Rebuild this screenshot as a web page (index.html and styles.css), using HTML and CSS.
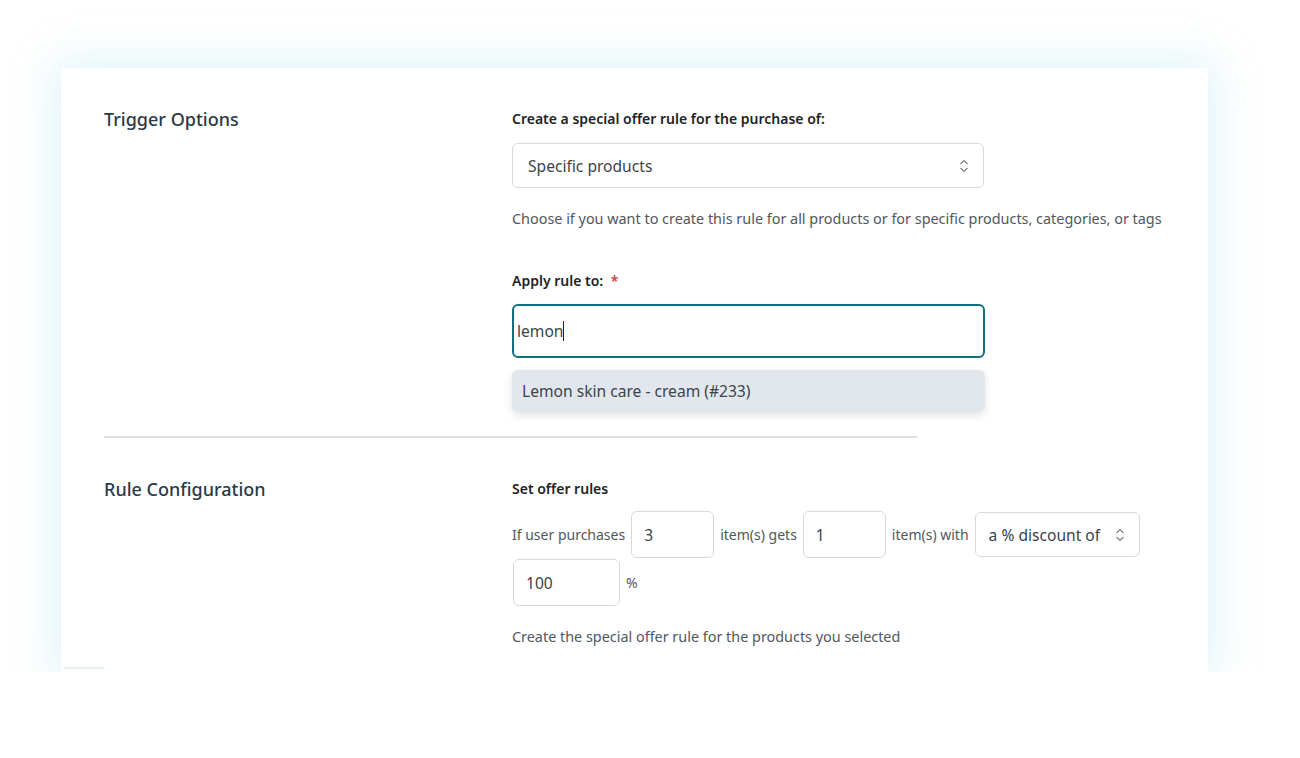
FILE: index.html
```html
<!DOCTYPE html>
<html lang="en">
<head>
  <meta charset="UTF-8" />
  <meta name="viewport" content="width=device-width, initial-scale=1.0" />
  <title>Special Offer Rule</title>
  <link rel="stylesheet" href="styles.css">
</head>
<body>
  <div class="card">
    <div class="section">
      <h2 class="section-title">Trigger Options</h2>
      <div class="fields">
        <label class="field-label">Create a special offer rule for the purchase of:</label>
        <div class="select select-wide">
          <span>Specific products</span>
          <svg class="chev" width="10" height="16" viewBox="0 0 10 16"><path d="M1.5 6 L5 2.5 L8.5 6 M1.5 10 L5 13.5 L8.5 10" fill="none" stroke="#7b8189" stroke-width="1.2"/></svg>
        </div>
        <p class="help">Choose if you want to create this rule for all products or for specific products, categories, or tags</p>

        <label class="field-label label-gap">Apply rule to: <span class="req">*</span></label>
        <div class="search">lemon<span class="caret"></span></div>
        <div class="suggest">Lemon skin care - cream (#233)</div>
      </div>
    </div>

    <hr class="divider">

    <div class="section section-2">
      <h2 class="section-title">Rule Configuration</h2>
      <div class="fields">
        <label class="field-label">Set offer rules</label>
        <div class="rule-row">
          <span class="txt">If user purchases</span>
          <div class="num num-a">3</div>
          <span class="txt">item(s) gets</span>
          <div class="num num-a">1</div>
          <span class="txt">item(s) with</span>
          <div class="select select-small">
            <span>a % discount of</span>
            <svg class="chev" width="10" height="16" viewBox="0 0 10 16"><path d="M1.5 6 L5 2.5 L8.5 6 M1.5 10 L5 13.5 L8.5 10" fill="none" stroke="#7b8189" stroke-width="1.2"/></svg>
          </div>
          <div class="num num-b">100</div>
          <span class="txt">%</span>
        </div>
        <p class="help help-last">Create the special offer rule for the products you selected</p>
      </div>
    </div>
    <div class="scroll-hint"></div>
  </div>
</body>
</html>
```

FILE: styles.css
```css
body {
  margin: 0;
  padding: 68px 0 0 61px;
  background: #fff;
  font-family: "Noto Sans", "Open Sans", Arial, sans-serif;
  color: #3c434a;
}
.card {
  width: 1147px;
  height: 604px;
  box-sizing: border-box;
  background: #fff;
  padding: 38px 0 0 43px;
  box-shadow: 0 0 40px 6px rgba(160, 218, 228, 0.35);
  position: relative;
}
.section {
  display: grid;
  grid-template-columns: 408px 1fr;
}
.section-title {
  margin: 0;
  font-size: 18px;
  font-weight: 500;
  line-height: 26px;
  color: #2c3a47;
}
.fields {
  padding-top: 3px;
}
.field-label {
  display: block;
  font-size: 14px;
  font-weight: 600;
  line-height: 20px;
  color: #1d2327;
}
.label-gap {
  margin-top: 42px;
}
.req {
  color: #d63638;
  margin-left: 4px;
}
.select {
  display: flex;
  align-items: center;
  justify-content: space-between;
  box-sizing: border-box;
  border: 1px solid #d5d9dd;
  border-radius: 6px;
  background: #fff;
  font-size: 15.6px;
  color: #3c434a;
}
.select-wide {
  width: 472px;
  height: 45px;
  margin-top: 14px;
  padding: 0 14px 0 15px;
}
.select-small {
  width: 165px;
  height: 45px;
  padding: 0 14px 0 13px;
  margin-left: 0;
}
.help {
  margin: 21px 0 0;
  font-size: 14.4px;
  line-height: 20px;
  color: #50575e;
}
.search {
  width: 473px;
  height: 54px;
  box-sizing: border-box;
  margin-top: 13px;
  border: 2px solid #10707f;
  border-radius: 6px;
  padding: 0 0 0 3px;
  display: flex;
  align-items: center;
  font-size: 15.6px;
  color: #3c434a;
}
.caret {
  display: inline-block;
  width: 1px;
  height: 20px;
  background: #222;
}
.suggest {
  width: 473px;
  height: 42px;
  box-sizing: border-box;
  margin-top: 12px;
  padding: 0 10px;
  display: flex;
  align-items: center;
  background: #e2e7ee;
  border-radius: 6px;
  box-shadow: 0 3px 8px rgba(0, 0, 0, 0.12);
  font-size: 15.6px;
  color: #3c434a;
}
.divider {
  width: 813px;
  margin: 24px 0 0;
  border: 0;
  border-top: 2px solid #e0e0e0;
}
.section-2 {
  margin-top: 38px;
}
.rule-row {
  display: flex;
  flex-wrap: wrap;
  align-items: center;
  row-gap: 1px;
  margin-top: 12px;
  width: 640px;
}
.txt {
  font-size: 14px;
  color: #50575e;
  margin-right: 6px;
}
.num {
  box-sizing: border-box;
  height: 47px;
  border: 1px solid #d5d9dd;
  border-radius: 6px;
  display: flex;
  align-items: center;
  padding-left: 12px;
  font-size: 15.6px;
  color: #3c434a;
  margin-right: 6px;
}
.num-a {
  width: 83px;
}
.num-b {
  width: 107px;
  margin-left: 1px;
}
.help-last {
  margin-top: 21px;
}
.scroll-hint {
  position: absolute;
  left: 3px;
  bottom: 3px;
  width: 40px;
  height: 2px;
  background: #e6eef0;
}
```
